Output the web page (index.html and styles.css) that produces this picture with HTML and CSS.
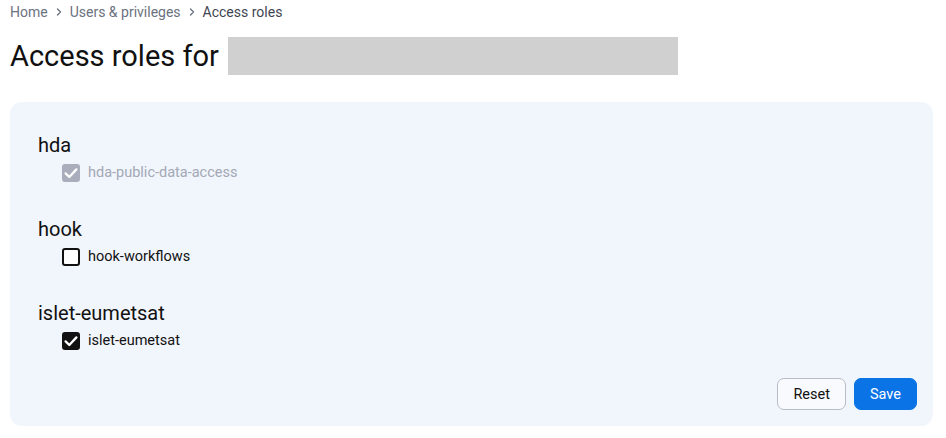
FILE: index.html
```html
<!DOCTYPE html>
<html lang="en">
<head>
<meta charset="utf-8">
<title>Access roles</title>
<link rel="stylesheet" href="styles.css">
</head>
<body>
<nav class="crumbs">
  <a class="crumb" href="#">Home</a>
  <svg class="sep" viewBox="0 0 10 10" width="10" height="10"><path d="M3.5 2 L6.5 5 L3.5 8" fill="none" stroke="currentColor" stroke-width="1.4" stroke-linecap="round" stroke-linejoin="round"/></svg>
  <a class="crumb" href="#">Users &amp; privileges</a>
  <svg class="sep" viewBox="0 0 10 10" width="10" height="10"><path d="M3.5 2 L6.5 5 L3.5 8" fill="none" stroke="currentColor" stroke-width="1.4" stroke-linecap="round" stroke-linejoin="round"/></svg>
  <span class="crumb current">Access roles</span>
</nav>
<h1 class="title">Access roles for <span class="redacted"></span></h1>
<form class="panel">
  <section class="group">
    <h2 class="group-name">hda</h2>
    <label class="role disabled">
      <span class="box checked"><svg viewBox="0 0 18 18" width="18" height="18"><path d="M3.6 9.4 L7.3 13 L14.4 5.4" fill="none" stroke="#fff" stroke-width="2.3" stroke-linecap="round" stroke-linejoin="round"/></svg></span>
      <span>hda-public-data-access</span>
    </label>
  </section>
  <section class="group">
    <h2 class="group-name">hook</h2>
    <label class="role">
      <span class="box"></span>
      <span>hook-workflows</span>
    </label>
  </section>
  <section class="group">
    <h2 class="group-name">islet-eumetsat</h2>
    <label class="role">
      <span class="box checked"><svg viewBox="0 0 18 18" width="18" height="18"><path d="M3.6 9.4 L7.3 13 L14.4 5.4" fill="none" stroke="#fff" stroke-width="2.3" stroke-linecap="round" stroke-linejoin="round"/></svg></span>
      <span>islet-eumetsat</span>
    </label>
  </section>
  <div class="actions">
    <button type="button" class="btn btn-outline">Reset</button>
    <button type="button" class="btn btn-primary">Save</button>
  </div>
</form>
</body>
</html>
```
FILE: styles.css
```css
* { box-sizing: border-box; }
html, body { margin: 0; background: #fff; }
body {
  font-family: Roboto, "Noto Sans", "Liberation Sans", sans-serif;
  color: #1a1a1a;
  padding: 3px 13px 0 10px;
}
.crumbs {
  display: flex;
  align-items: center;
  gap: 6px;
  font-size: 14px;
  line-height: 18px;
  color: #6b7280;
}
.crumb { color: #6b7280; text-decoration: none; }
.crumb.current { color: #3f4652; }
.sep { color: #6b7280; }
.title {
  margin: 15px 0 0;
  font-size: 29px;
  font-weight: 400;
  line-height: 40px;
  display: flex;
  align-items: center;
  gap: 9px;
  color: #111;
}
.redacted {
  display: inline-block;
  width: 450px;
  height: 38px;
  background: #d0d0d0;
}
.panel {
  margin-top: 26px;
  background: #f1f5fc;
  border-radius: 12px;
  padding: 30px 16px 16px 28px;
  display: flex;
  flex-direction: column;
}
.group { margin-bottom: 33px; }
.group-name {
  margin: 0;
  font-size: 20px;
  font-weight: 400;
  line-height: 26px;
  color: #111;
}
.role {
  margin-top: 5px;
  margin-left: 24px;
  display: flex;
  align-items: center;
  gap: 8px;
  font-size: 14.5px;
  line-height: 20px;
  color: #111;
}
.role.disabled { color: #a3a8b6; }
.box {
  width: 18px;
  height: 18px;
  border: 2px solid #111;
  border-radius: 3px;
  display: inline-flex;
  align-items: center;
  justify-content: center;
  background: #fff;
  overflow: visible;
}
.box svg { flex: none; margin: -2px; }
.box.checked { background: #111; }
.role.disabled .box { background: #a9adbc; border-color: #a9adbc; }
.actions {
  display: flex;
  justify-content: flex-end;
  gap: 8px;
  margin-top: -6px;
}
.btn {
  font-family: inherit;
  font-size: 14.5px;
  height: 32px;
  padding: 0 15px;
  border-radius: 7px;
  cursor: pointer;
}
.btn-outline { background: #f8fafd; border: 1px solid #b8bcc6; color: #111; }
.btn-primary { background: #0a73e6; border: 1px solid #0a73e6; color: #fff; }
```
